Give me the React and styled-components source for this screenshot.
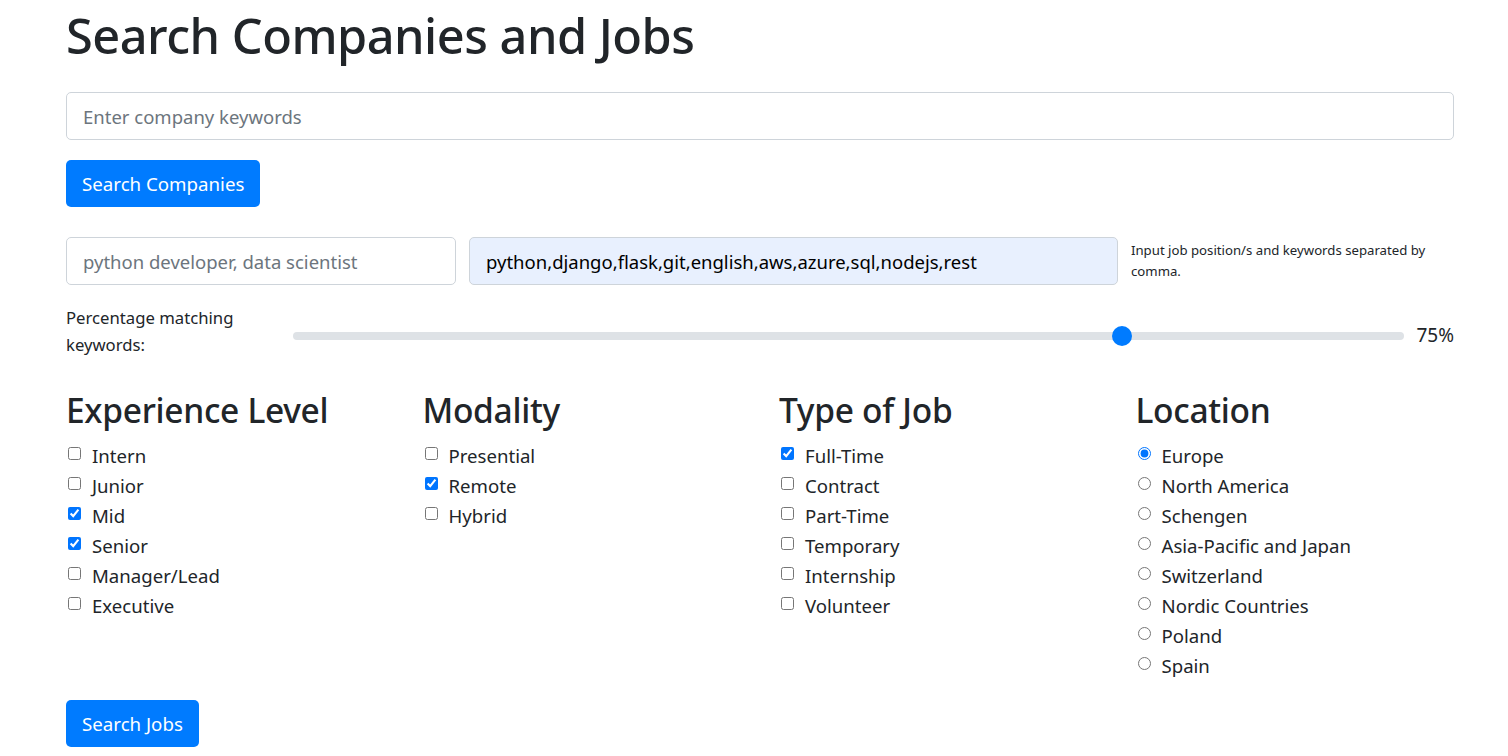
import React from "react";
import styled, { createGlobalStyle } from "styled-components";

const Global = createGlobalStyle`
  body {
    margin: 0;
    font-family: "Noto Sans", "Open Sans", Arial, sans-serif;
    color: #212529;
    background: #fff;
  }
  * { box-sizing: border-box; }
`;

const Page = styled.div`
  padding: 0 54px 0 66px;
`;

const Title = styled.h1`
  margin: 0 0 22px;
  font-size: 48.7px;
  font-weight: 500;
  line-height: 70px;
  letter-spacing: -0.5px;
`;

const TextInput = styled.input`
  display: block;
  width: ${(p) => p.$w || "100%"};
  height: 48px;
  padding: 0 16px;
  font-family: inherit;
  font-size: 18.5px;
  color: ${(p) => (p.$filled ? "#000" : "#495057")};
  background: ${(p) => (p.$filled ? "#e8f0fe" : "#fff")};
  border: 1px solid #ced4da;
  border-radius: 5px;
  outline: none;
  &::placeholder { color: #6c757d; }
`;

const Button = styled.button`
  display: block;
  height: 47px;
  padding: 0 16px;
  margin-top: ${(p) => p.$mt || 0}px;
  font-family: inherit;
  font-size: 18.7px;
  color: #fff;
  background: #007bff;
  border: none;
  border-radius: 5px;
`;

const KeywordRow = styled.div`
  display: flex;
  align-items: flex-start;
  gap: 13px;
  margin-top: 30px;
`;

const HelpText = styled.small`
  display: block;
  width: 310px;
  padding-top: 3px;
  font-size: 13.2px;
  line-height: 21px;
`;

const SliderRow = styled.div`
  display: flex;
  align-items: center;
  margin-top: 18px;
  height: 56px;
`;

const SliderLabel = styled.label`
  width: 227px;
  font-size: 16.7px;
  line-height: 27px;
`;

const Range = styled.input`
  flex: 1;
  -webkit-appearance: none;
  appearance: none;
  height: 20px;
  margin: 9px 12px 0 0;
  background: transparent;
  &::-webkit-slider-runnable-track {
    height: 8px;
    background: #dee2e6;
    border-radius: 4px;
  }
  &::-webkit-slider-thumb {
    -webkit-appearance: none;
    width: 20px;
    height: 20px;
    margin-top: -6px;
    border-radius: 50%;
    background: #007bff;
    border: none;
  }
`;

const RangeValue = styled.span`
  margin-top: 8px;
  font-size: 19px;
`;

const Filters = styled.div`
  display: grid;
  grid-template-columns: repeat(4, 356.5px);
  margin-top: 29px;
`;

const Heading = styled.h2`
  margin: 0 0 8px;
  font-size: 33.5px;
  font-weight: 500;
  line-height: 44px;
  letter-spacing: -0.3px;
`;

const Option = styled.label`
  display: flex;
  align-items: center;
  height: 30px;
  font-size: 18.6px;
  input {
    width: 13px;
    height: 13px;
    margin: -4px 11px 0 2px;
    accent-color: #0075ff;
  }
`;

const groups = [
  {
    title: "Experience Level",
    type: "checkbox",
    items: [["Intern"], ["Junior"], ["Mid", true], ["Senior", true], ["Manager/Lead"], ["Executive"]],
  },
  { title: "Modality", type: "checkbox", items: [["Presential"], ["Remote", true], ["Hybrid"]] },
  {
    title: "Type of Job",
    type: "checkbox",
    items: [["Full-Time", true], ["Contract"], ["Part-Time"], ["Temporary"], ["Internship"], ["Volunteer"]],
  },
  {
    title: "Location",
    type: "radio",
    items: [
      ["Europe", true],
      ["North America"],
      ["Schengen"],
      ["Asia-Pacific and Japan"],
      ["Switzerland"],
      ["Nordic Countries"],
      ["Poland"],
      ["Spain"],
    ],
  },
];

export default function App() {
  return (
    <Page>
      <Global />
      <Title>Search Companies and Jobs</Title>
      <TextInput placeholder="Enter company keywords" />
      <Button $mt={20}>Search Companies</Button>

      <KeywordRow>
        <TextInput $w="390px" placeholder="python developer, data scientist" />
        <TextInput $w="649px" $filled defaultValue="python,django,flask,git,english,aws,azure,sql,nodejs,rest" />
        <HelpText>Input job position/s and keywords separated by comma.</HelpText>
      </KeywordRow>

      <SliderRow>
        <SliderLabel>Percentage matching keywords:</SliderLabel>
        <Range type="range" min="0" max="100" defaultValue="75" />
        <RangeValue>75%</RangeValue>
      </SliderRow>

      <Filters>
        {groups.map((g) => (
          <div key={g.title}>
            <Heading>{g.title}</Heading>
            {g.items.map(([name, on]) => (
              <Option key={name}>
                <input type={g.type} name={g.type === "radio" ? "loc" : name} defaultChecked={!!on} />
                {name}
              </Option>
            ))}
          </div>
        ))}
      </Filters>

      <Button $mt={20}>Search Jobs</Button>
    </Page>
  );
}
